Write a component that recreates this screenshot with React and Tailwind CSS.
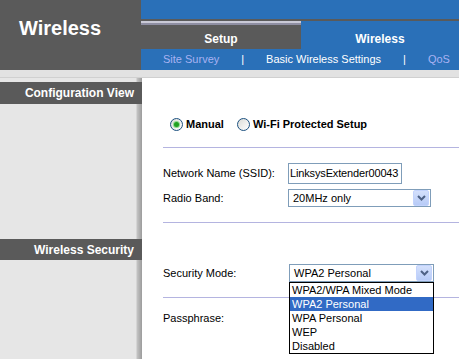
import React from 'react';

const font = { fontFamily: '"Liberation Sans", Arial, sans-serif' };

function Radio({ checked }) {
  return (
    <span className="w-[13px] h-[13px] rounded-full border border-[#1c5180] bg-gradient-to-br from-[#dcdcd7] to-white flex items-center justify-center shrink-0">
      {checked && <span className="w-[5px] h-[5px] rounded-full bg-[#21a121] shadow-[0_0_0_1px_#8fd88f]"></span>}
    </span>
  );
}

function ArrowButton() {
  return (
    <span className="w-[16px] h-[16px] bg-gradient-to-b from-[#d4e0fc] to-[#b7cbf7] border border-[#c3d3fd] rounded-[2px] flex items-center justify-center">
      <svg width="9" height="6" viewBox="0 0 9 6">
        <path d="M1 1 L4.5 4.5 L8 1" fill="none" stroke="#4d6185" strokeWidth="2" />
      </svg>
    </span>
  );
}

function Select({ value, width, children }) {
  return (
    <div className="relative">
      <div className={`${width} h-[18px] border border-[#7f9db9] bg-white flex items-center justify-between pl-[4px] pr-px text-[11px] text-black`}>
        <span>{value}</span>
        <ArrowButton />
      </div>
      {children}
    </div>
  );
}

export default function App() {
  const options = ['WPA2/WPA Mixed Mode', 'WPA2 Personal', 'WPA Personal', 'WEP', 'Disabled'];

  return (
    <div className="w-[459px] h-[359px] overflow-hidden bg-white flex flex-col" style={font}>
      {/* header */}
      <div className="flex h-[70px]">
        <div className="w-[141px] bg-[#5a5a5a] pl-[19px] pt-[17px]">
          <h1 className="text-[20px] font-bold text-white leading-[22px]">Wireless</h1>
        </div>
        <div className="flex-1 flex flex-col">
          <div className="h-[19px] bg-[#2a70b8]"></div>
          <div className="h-[2px] bg-[#5a5a5a]"></div>
          <div className="flex h-[28px]">
            <div className="w-[160px] bg-[#5a5a5a] flex flex-col">
              <div className="h-[2px] bg-[#c9c9d6]"></div>
              <div className="h-[2px] bg-[#8e8ea2]"></div>
              <div className="flex-1 flex items-center justify-center pt-[4px] text-[12px] font-bold text-white">Setup</div>
            </div>
            <div className="flex-1 bg-[#2a70b8] flex items-center justify-center pt-[8px] text-[12px] font-bold text-white">Wireless</div>
          </div>
          <div className="h-[21px] bg-[#2a70b8] flex items-center pl-[22px] gap-[22px] text-[11px] text-white">
            <span className="text-[#a8b2f2]">Site Survey</span>
            <span>|</span>
            <span>Basic Wireless Settings</span>
            <span>|</span>
            <span className="text-[#a8b2f2]">QoS</span>
          </div>
        </div>
      </div>
      <div className="h-[8px] bg-[#e2e2e2] border-b border-[#d0d0d0]"></div>

      {/* body */}
      <div className="flex flex-1">
        <div className="w-[142px] bg-[linear-gradient(to_right,#e6e6e6_0,#e6e6e6_136px,#c4c4c4_137px,#9c9c9c_142px)] flex flex-col">
          <div className="mt-[4px] h-[22px] bg-[#5a5a5a] flex items-center justify-end pr-[8px] text-[12px] font-bold text-white">Configuration View</div>
          <div className="mt-[135px] h-[21px] bg-[#5a5a5a] flex items-center justify-end pr-[8px] text-[12px] font-bold text-white">Wireless Security</div>
        </div>

        <div className="flex-1 bg-white pl-[21px] flex flex-col text-[11px] text-black">
          <div className="mt-[38px] h-[16px] flex items-center pl-[7px] text-[11px] font-bold">
            <Radio checked />
            <span className="ml-[3px]">Manual</span>
            <span className="ml-[13px]"><Radio /></span>
            <span className="ml-[3px]">Wi-Fi Protected Setup</span>
          </div>
          <div className="mt-[15px] h-px bg-[#b4b4e0]"></div>

          <div className="mt-[15px] h-[21px] flex items-center">
            <span className="w-[125px]">Network Name (SSID):</span>
            <div className="w-[114px] h-[21px] border border-[#7f9db9] flex items-center pl-[1px] overflow-hidden whitespace-nowrap text-[11px] tracking-[-0.15px]">LinksysExtender00043</div>
          </div>
          <div className="mt-[5px] h-[18px] flex items-center">
            <span className="w-[125px]">Radio Band:</span>
            <Select value="20MHz only" width="w-[143px]" />
          </div>
          <div className="mt-[15px] h-px bg-[#b4b4e0]"></div>

          <div className="mt-[41px] h-[18px] flex items-center relative z-10">
            <span className="w-[126px]">Security Mode:</span>
            <Select value="WPA2 Personal" width="w-[145px]">
              <ul className="absolute left-0 top-[18px] w-[145px] border border-black bg-white">
                {options.map((o) => (
                  <li
                    key={o}
                    className={`h-[14px] leading-[14px] pl-[2px] ${o === 'WPA2 Personal' ? 'bg-[#316ac5] text-white' : ''}`}
                  >
                    {o}
                  </li>
                ))}
              </ul>
            </Select>
          </div>
          <div className="mt-[15px] h-px bg-[#b4b4e0]"></div>

          <div className="mt-[13px] h-[14px] flex items-center">
            <span>Passphrase:</span>
          </div>
        </div>
      </div>
    </div>
  );
}
